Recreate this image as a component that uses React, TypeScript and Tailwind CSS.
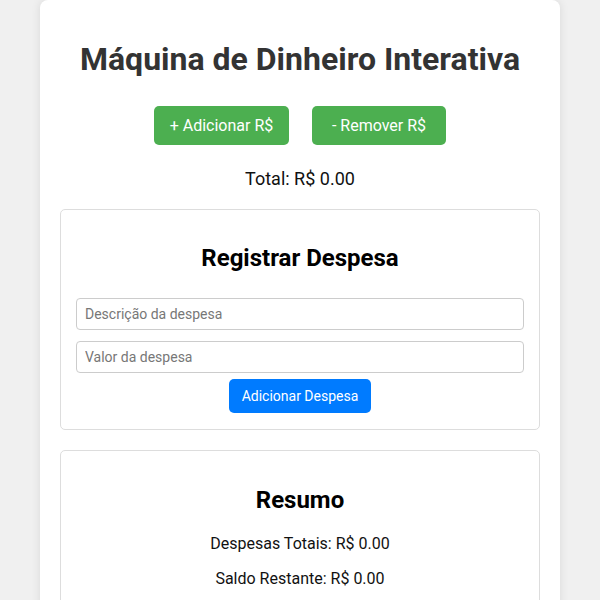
import React from "react";

const App = () => {
  return (
    <div className="min-h-screen bg-[#f0f0f0] font-['Roboto',sans-serif]">
      <div className="mx-auto w-[520px] rounded-lg bg-white p-5 text-center shadow-[0_0_10px_rgba(0,0,0,0.1)]">
        <h1 className="my-[21px] text-[32px] font-bold leading-[37px] text-[#333]">
          Máquina de Dinheiro Interativa
        </h1>
        <div className="flex justify-center gap-[23px]">
          <button className="mt-[7px] mb-[5px] h-[39px] w-[135px] rounded-[5px] bg-[#4caf50] text-base text-white">
            + Adicionar R$
          </button>
          <button className="mt-[7px] mb-[5px] h-[39px] w-[134px] rounded-[5px] bg-[#4caf50] text-base text-white">
            - Remover R$
          </button>
        </div>
        <p className="my-[18px] text-lg leading-[21px] text-[#111]">Total: R$ 0.00</p>

        {/* Registrar despesa */}
        <div className="mt-5 rounded-[5px] border border-[#ddd] p-[15px] pb-[16px]">
          <h2 className="mt-[19px] mb-[26px] text-2xl font-bold leading-[28px] text-black">
            Registrar Despesa
          </h2>
          <input
            className="mb-[11px] block h-[32px] w-full rounded-[4px] border border-[#ccc] px-2 text-sm text-[#333] placeholder:text-[#777]"
            placeholder="Descrição da despesa"
          />
          <input
            className="block h-[32px] w-full rounded-[4px] border border-[#ccc] px-2 text-sm text-[#333] placeholder:text-[#777]"
            placeholder="Valor da despesa"
          />
          <button className="mt-[6px] h-[34px] rounded-[5px] bg-[#007bff] px-[13px] text-sm text-white">
            Adicionar Despesa
          </button>
        </div>

        {/* Resumo */}
        <div className="mt-5 rounded-[5px] border border-[#ddd] p-[15px]">
          <h2 className="mt-5 mb-5 text-2xl font-bold leading-[28px] text-black">Resumo</h2>
          <p className="mb-4 text-base leading-[19px] text-[#111]">Despesas Totais: R$ 0.00</p>
          <p className="mb-4 text-base leading-[19px] text-[#111]">Saldo Restante: R$ 0.00</p>
        </div>
      </div>
    </div>
  );
};

export default App;
